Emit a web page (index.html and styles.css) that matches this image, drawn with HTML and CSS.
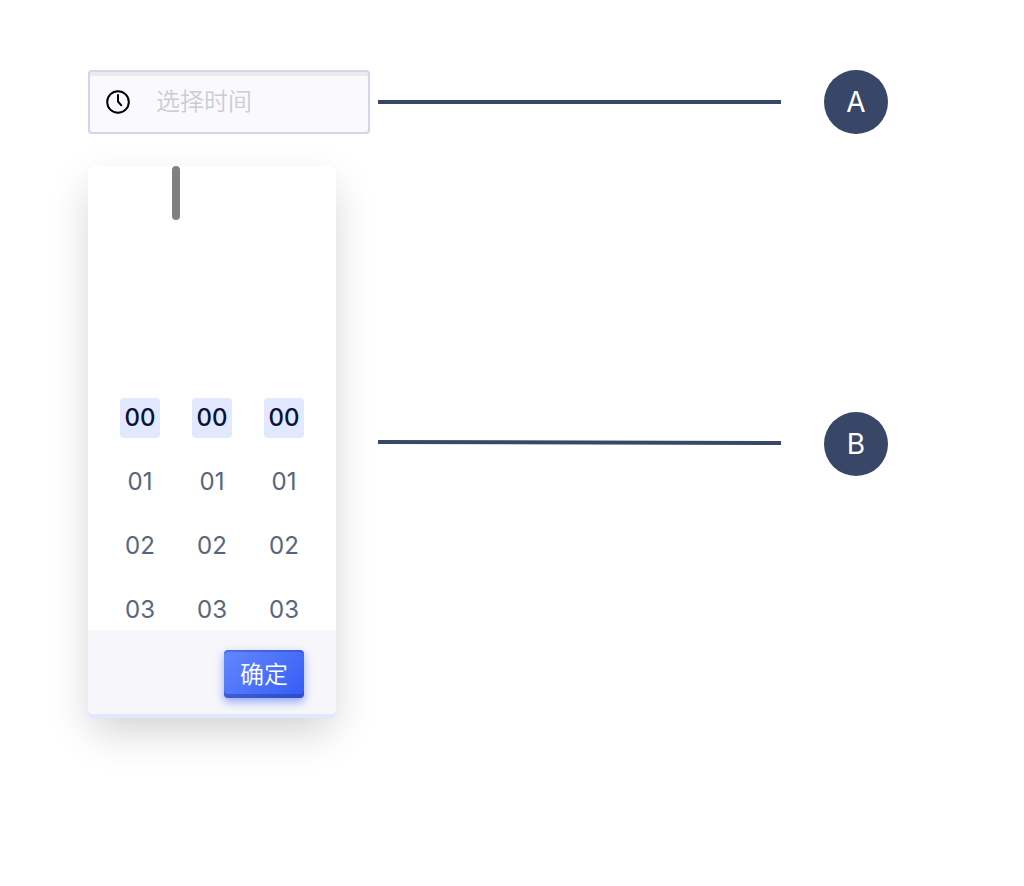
FILE: index.html
```html
<!DOCTYPE html>
<html lang="zh-CN">
<head>
<meta charset="utf-8">
<meta name="viewport" content="width=device-width, initial-scale=1">
<title>时间选择</title>
<link rel="stylesheet" href="styles.css">
</head>
<body>
<main class="anatomy">
  <label class="time-field">
    <svg class="clock" viewBox="0 0 24 24" aria-hidden="true">
      <circle cx="12" cy="12" r="10.8"/>
      <path d="M12 5v6.5l3.3 3.8"/>
    </svg>
    <input class="time-input" type="text" placeholder="选择时间" aria-label="选择时间">
  </label>
  <svg class="leader" viewBox="0 0 403 8" preserveAspectRatio="none" aria-hidden="true">
    <path d="M0 4H403"/>
  </svg>
  <span class="marker">A</span>

  <section class="picker">
    <div class="columns">
      <ul class="column column-scrolled">
        <li><button class="cell cell-selected" type="button">00</button></li>
        <li><button class="cell" type="button">01</button></li>
        <li><button class="cell" type="button">02</button></li>
        <li><button class="cell" type="button">03</button></li>
      </ul>
      <ul class="column">
        <li><button class="cell cell-selected" type="button">00</button></li>
        <li><button class="cell" type="button">01</button></li>
        <li><button class="cell" type="button">02</button></li>
        <li><button class="cell" type="button">03</button></li>
      </ul>
      <ul class="column">
        <li><button class="cell cell-selected" type="button">00</button></li>
        <li><button class="cell" type="button">01</button></li>
        <li><button class="cell" type="button">02</button></li>
        <li><button class="cell" type="button">03</button></li>
      </ul>
    </div>
    <footer class="picker-footer">
      <button class="confirm" type="button">确定</button>
    </footer>
  </section>
  <svg class="leader" viewBox="0 0 403 8" preserveAspectRatio="none" aria-hidden="true">
    <path d="M0 2L403 3"/>
  </svg>
  <span class="marker">B</span>
</main>
</body>
</html>
```
FILE: styles.css
```css
* {
  box-sizing: border-box;
}

body {
  margin: 0;
  background: #fff;
  font-family: Inter, "Noto Sans CJK SC", sans-serif;
}

button,
input {
  font: inherit;
}

.anatomy {
  display: grid;
  grid-template-columns: 282px 1fr 64px;
  row-gap: 32px;
  align-items: center;
  padding: 70px 136px 70px 88px;
}

.time-field {
  display: flex;
  align-items: center;
  gap: 26px;
  height: 64px;
  padding: 0 16px;
  border: 2px solid #d2d5ec;
  border-radius: 4px;
  background: #fafafd;
  box-shadow: inset 0 4px 0 #ebebed;
}

.clock {
  flex: none;
  width: 24px;
  height: 24px;
  fill: none;
  stroke: #000;
  stroke-width: 2;
  stroke-linecap: round;
  stroke-linejoin: round;
}

.time-input {
  flex: 1;
  min-width: 0;
  padding: 0 0 2px;
  border: 0;
  outline: 0;
  background: transparent;
  color: #071437;
  font-size: 24px;
  font-weight: 350;
}

.time-input::placeholder {
  color: #cccdd4;
  opacity: 1;
}

.leader {
  width: calc(100% - 51px);
  height: 8px;
  margin-left: 8px;
  stroke: #384667;
  stroke-width: 4;
}

.marker {
  display: flex;
  align-items: center;
  justify-content: center;
  height: 64px;
  border-radius: 50%;
  background: #384667;
  color: #fff;
  font-size: 28px;
}

.picker {
  width: 248px;
  margin-bottom: 4px;
  border-radius: 4px;
  background: #e0e8ff;
  padding-bottom: 4px;
  box-shadow: 0 16px 40px -4px rgba(0, 0, 0, 0.19);
}

.columns {
  display: grid;
  grid-template-columns: repeat(3, 1fr);
  padding: 0 16px;
  border-radius: 4px 4px 0 0;
  background: #fff;
}

.column {
  position: relative;
  display: flex;
  flex-direction: column;
  align-items: center;
  gap: 24px;
  margin: 0;
  padding: 232px 0 0;
  list-style: none;
}

.column-scrolled::after {
  content: "";
  position: absolute;
  top: 0;
  right: -4px;
  width: 8px;
  height: 54px;
  border-radius: 4px;
  background: #808080;
}

.cell {
  display: flex;
  align-items: center;
  justify-content: center;
  width: 40px;
  height: 40px;
  padding: 0 0 2px;
  border: 0;
  border-radius: 4px;
  background: transparent;
  color: #56657d;
  font-size: 24px;
}

.cell-selected {
  background: #e2e8ff;
  color: #071437;
  font-weight: 500;
}

.picker-footer {
  display: flex;
  justify-content: flex-end;
  padding: 20px 32px 16px;
  background: #f6f6fb;
  border-radius: 0 0 4px 4px;
}

.confirm {
  height: 48px;
  padding: 0 16px 4px;
  border: 0;
  border-radius: 4px;
  background: linear-gradient(135deg, #6388ff, #355cf3);
  box-shadow: inset 0 -4px 0 rgba(28, 54, 150, 0.4), inset 0 2px 0 rgba(28, 54, 150, 0.3), 0 4px 8px rgba(53, 92, 243, 0.5);
  color: #fff;
  font-size: 24px;
  font-weight: 350;
}
```
